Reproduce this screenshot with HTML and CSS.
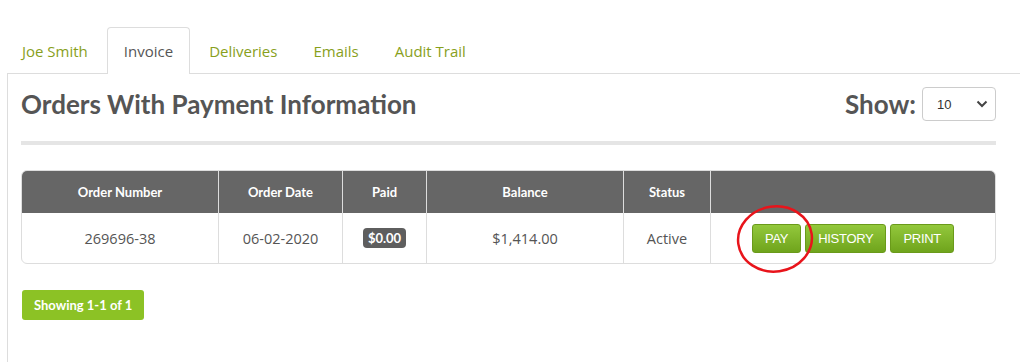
FILE: index.html
```html
<!DOCTYPE html>
<html lang="en">
  <head>
    <meta charset="UTF-8" />
    <title>Invoice - Joe Smith</title>
    <link rel="stylesheet" href="styles.css">
  </head>
  <body>
    <ul class="tabs">
      <li><a href="#">Joe Smith</a></li>
      <li class="active"><a href="#">Invoice</a></li>
      <li><a href="#">Deliveries</a></li>
      <li><a href="#">Emails</a></li>
      <li><a href="#">Audit Trail</a></li>
    </ul>
    <section class="panel">
      <div class="panel-head">
        <h2>Orders With Payment Information</h2>
        <div class="show">
          <label for="perPage">Show:</label>
          <div class="select-wrap">
            <select id="perPage">
              <option>10</option>
              <option>25</option>
              <option>50</option>
            </select>
            <svg class="caret" width="12" height="8" viewBox="0 0 12 8">
              <path d="M1.5 1.5 L6 6 L10.5 1.5" fill="none" stroke="#444" stroke-width="2" />
            </svg>
          </div>
        </div>
      </div>
      <hr class="rule" />
      <div class="table-wrap">
        <table class="orders">
          <thead>
            <tr>
              <th class="c-num">Order Number</th>
              <th class="c-date">Order Date</th>
              <th class="c-paid">Paid</th>
              <th class="c-bal">Balance</th>
              <th class="c-status">Status</th>
              <th class="c-actions"></th>
            </tr>
          </thead>
          <tbody>
            <tr>
              <td>269696-38</td>
              <td>06-02-2020</td>
              <td><span class="badge">$0.00</span></td>
              <td>$1,414.00</td>
              <td>Active</td>
              <td>
                <div class="actions">
                  <button class="btn">PAY</button>
                  <button class="btn">HISTORY</button>
                  <button class="btn">PRINT</button>
                  <!-- hand-drawn highlight round the PAY button -->
                  <svg class="circle" width="86" height="74" viewBox="0 0 86 74">
                    <ellipse cx="43" cy="37" rx="37" ry="32.5" fill="none" stroke="#e8141b" stroke-width="2.5" transform="rotate(-8 43 37)" />
                  </svg>
                </div>
              </td>
            </tr>
          </tbody>
        </table>
      </div>
      <div class="showing">Showing 1-1 of 1</div>
    </section>
  </body>
</html>
```

FILE: styles.css
```css
body {
  margin: 0;
  background: white;
  font-family: "Open Sans", "Noto Sans", sans-serif;
  color: #555;
  overflow: hidden;
}
.tabs {
  list-style: none;
  margin: 0;
  padding: 27px 0 0 5px;
  display: flex;
  position: relative;
  z-index: 1;
}
.tabs li {
  margin-right: 2px;
  border: 1px solid transparent;
  border-bottom: none;
  border-radius: 4px 4px 0 0;
  margin-bottom: -1px;
}
.tabs a {
  display: block;
  padding: 0 16px;
  height: 46px;
  line-height: 47px;
  font-size: 15px;
  color: #88a01c;
  text-decoration: none;
}
.tabs li.active {
  border-color: #ddd;
  background: white;
}
.tabs li.active a {
  color: #555;
}
.panel {
  margin-left: 7px;
  border-left: 1px solid #ddd;
  border-top: 1px solid #ddd;
  padding: 13px 24px 0 13px;
  height: 289px;
  box-sizing: border-box;
}
.panel-head {
  display: flex;
  justify-content: space-between;
  align-items: center;
  height: 34px;
}
h2 {
  margin: 0;
  font-family: "Lato", sans-serif;
  font-weight: bold;
  font-size: 26px;
  color: #555;
}
.show {
  display: flex;
  align-items: center;
  gap: 6px;
}
.show label {
  font-family: "Lato", sans-serif;
  font-weight: bold;
  font-size: 26px;
  color: #555;
}
.select-wrap {
  position: relative;
}
.select-wrap select {
  appearance: none;
  width: 74px;
  height: 34px;
  border: 1px solid #ccc;
  border-radius: 4px;
  background: white;
  padding: 0 14px;
  font-family: "Liberation Sans", sans-serif;
  font-size: 13px;
  color: #333;
}
.caret {
  position: absolute;
  right: 8px;
  top: 13px;
  pointer-events: none;
}
.rule {
  border: none;
  height: 4px;
  background: #e5e5e5;
  margin: 20px 0 25px;
}
.table-wrap {
  border: 1px solid #ddd;
  border-radius: 6px;
}
.orders {
  width: 100%;
  border-collapse: separate;
  border-spacing: 0;
  table-layout: fixed;
}
.orders th {
  background: #666;
  color: white;
  font-family: "Lato", sans-serif;
  font-weight: bold;
  font-size: 13px;
  height: 42px;
  padding: 0;
  border-left: 1px solid #ddd;
}
.orders th:first-child {
  border-top-left-radius: 5px;
}
.orders th:last-child {
  border-top-right-radius: 5px;
}
.orders td {
  height: 50px;
  padding: 0;
  text-align: center;
  font-size: 14.5px;
  color: #555;
  border-left: 1px solid #ddd;
}
.orders th:first-child,
.orders td:first-child {
  border-left: none;
}
.c-num { width: 196px; }
.c-date { width: 123px; }
.c-paid { width: 83px; }
.c-bal { width: 196px; }
.c-status { width: 86px; }
.badge {
  display: inline-block;
  background: #5e5e5e;
  color: white;
  font-family: "Lato", sans-serif;
  font-weight: bold;
  font-size: 13px;
  padding: 2px 5px;
  border-radius: 4px;
  line-height: 16px;
}
.actions {
  position: relative;
  display: flex;
  justify-content: center;
  gap: 4px;
}
.circle {
  position: absolute;
  left: 21px;
  top: -22px;
  pointer-events: none;
}
.btn {
  height: 29px;
  padding: 0 12px;
  border: 1px solid #6a9a1a;
  border-radius: 3px;
  background: linear-gradient(#93c83c, #6fa41c);
  color: white;
  font-family: "Liberation Sans", sans-serif;
  font-size: 13px;
  letter-spacing: -0.3px;
  cursor: pointer;
}
.showing {
  display: inline-block;
  margin-top: 26px;
  margin-left: 1px;
  background: #8cc225;
  color: white;
  font-family: "Lato", sans-serif;
  font-weight: bold;
  font-size: 13px;
  padding: 0 12px;
  height: 30px;
  line-height: 30px;
  border-radius: 3px;
}
```
